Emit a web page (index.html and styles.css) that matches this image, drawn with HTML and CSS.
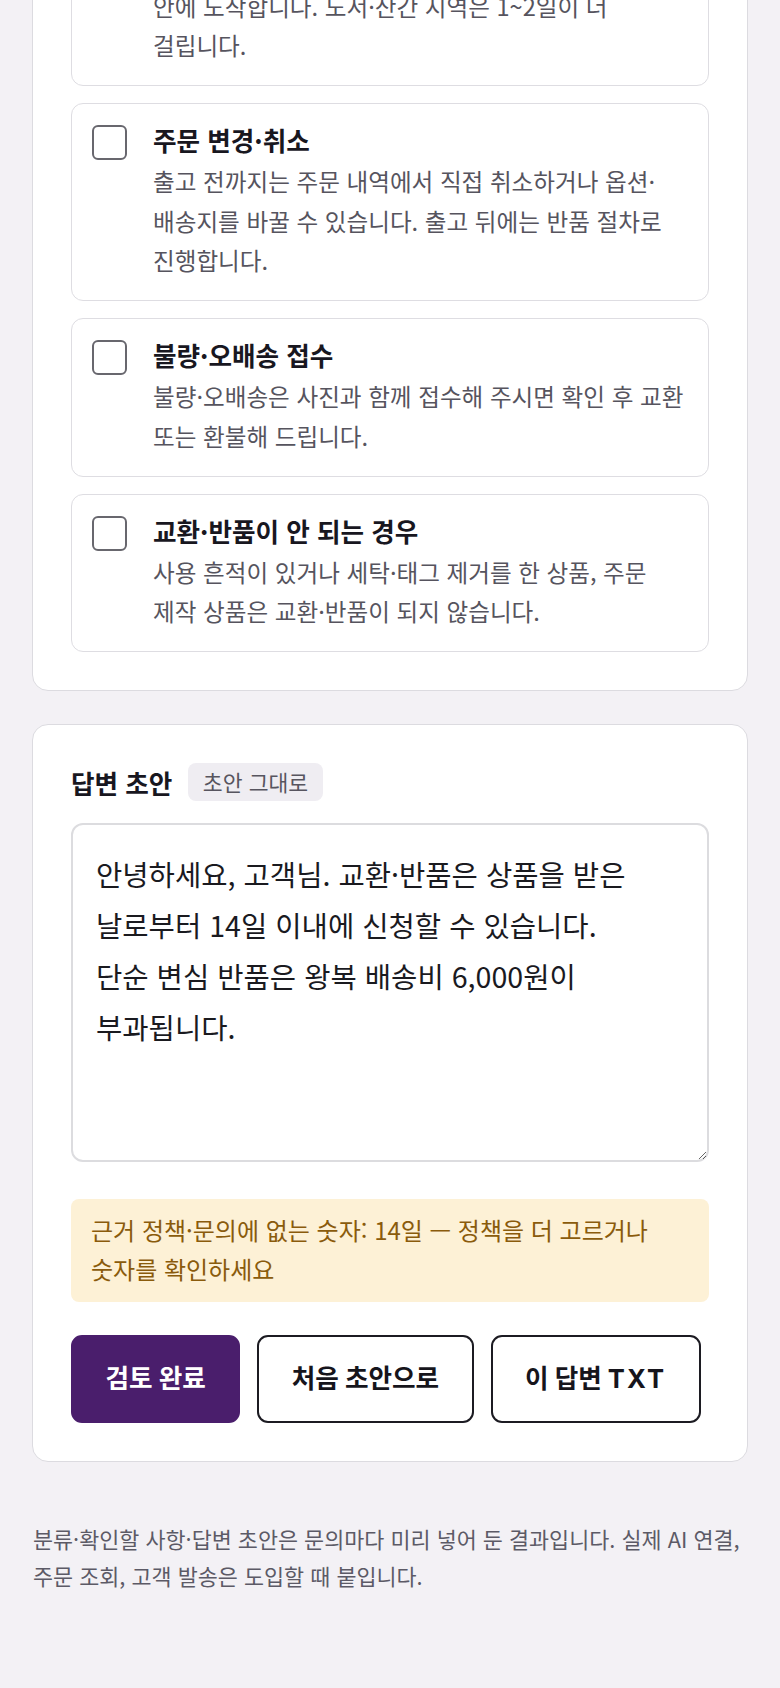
FILE: index.html
```html
<!DOCTYPE html>
<html lang="ko">
  <head>
    <meta charset="UTF-8" />
    <meta name="viewport" content="width=device-width, initial-scale=1.0" />
    <title>문의 답변 검토</title>
    <link rel="stylesheet" href="styles.css">
  </head>
  <body>
    <div class="page">
      <section class="panel">
        <div class="panel_head">
          <h2>확인할 사항</h2>
          <span class="tag">4개</span>
        </div>
        <ul class="checks">
          <li class="check">
            <input type="checkbox" class="box" id="c1" />
            <label for="c1">
              <strong>배송 기간</strong>
              <span>평일 오후 2시 전 결제 건은 당일 출고되며 보통 2~3일 안에 도착합니다. 도서·산간 지역은 1~2일이 더 걸립니다.</span>
            </label>
          </li>
          <li class="check">
            <input type="checkbox" class="box" id="c2" />
            <label for="c2">
              <strong>주문 변경·취소</strong>
              <span>출고 전까지는 주문 내역에서 직접 취소하거나 옵션·배송지를 바꿀 수 있습니다. 출고 뒤에는 반품 절차로 진행합니다.</span>
            </label>
          </li>
          <li class="check">
            <input type="checkbox" class="box" id="c3" />
            <label for="c3">
              <strong>불량·오배송 접수</strong>
              <span>불량·오배송은 사진과 함께 접수해 주시면 확인 후 교환 또는 환불해 드립니다.</span>
            </label>
          </li>
          <li class="check">
            <input type="checkbox" class="box" id="c4" />
            <label for="c4">
              <strong>교환·반품이 안 되는 경우</strong>
              <span>사용 흔적이 있거나 세탁·태그 제거를 한 상품, 주문 제작 상품은 교환·반품이 되지 않습니다.</span>
            </label>
          </li>
        </ul>
      </section>

      <section class="panel">
        <div class="panel_head">
          <h2>답변 초안</h2>
          <span class="tag">초안 그대로</span>
        </div>
        <textarea class="draft" rows="6">안녕하세요, 고객님. 교환·반품은 상품을 받은 날로부터 14일 이내에 신청할 수 있습니다.
단순 변심 반품은 왕복 배송비 6,000원이 부과됩니다.</textarea>
        <p class="warn">근거 정책·문의에 없는 숫자: 14일 — 정책을 더 고르거나 숫자를 확인하세요</p>
        <div class="actions">
          <button class="btn primary">검토 완료</button>
          <button class="btn">처음 초안으로</button>
          <button class="btn">이 답변 <span class="ext">TXT</span></button>
        </div>
      </section>

      <p class="note">분류·확인할 사항·답변 초안은 문의마다 미리 넣어 둔 결과입니다. 실제 AI 연결, 주문 조회, 고객 발송은 도입할 때 붙입니다.</p>
    </div>
  </body>
</html>
```

FILE: styles.css
```css
* {
  box-sizing: border-box;
  margin: 0;
  padding: 0;
}
body {
  font-family: "Noto Sans CJK KR", "Noto Sans", sans-serif;
  background-color: #f3f1f5;
  color: #18171f;
  word-break: keep-all;
}
.page {
  margin-top: -211px;
  padding: 0 32px 120px;
}
.panel {
  background-color: #fff;
  border: 1px solid #dcdbe0;
  border-radius: 16px;
  padding: 38px;
  margin-bottom: 33px;
}
.panel_head {
  display: flex;
  align-items: center;
  gap: 16px;
  height: 38px;
  margin-bottom: 22px;
}
.panel_head h2 {
  font-size: 25.6px;
  font-weight: 700;
}
.tag {
  background-color: #efedf2;
  color: #57555f;
  font-size: 21.6px;
  line-height: 38px;
  padding: 0 14.5px;
  border-radius: 8px;
}
.checks {
  list-style: none;
  display: flex;
  flex-direction: column;
  gap: 17px;
}
.check {
  display: flex;
  gap: 26px;
  border: 1px solid #dedde2;
  border-radius: 12px;
  padding: 20px 19px 19.5px 20px;
}
.box {
  -webkit-appearance: none;
  appearance: none;
  flex: none;
  width: 35px;
  height: 35px;
  margin-top: 1px;
  border: 2px solid #68676e;
  border-radius: 6px;
  background-color: #fff;
}
.check label {
  display: flex;
  flex-direction: column;
}
.check strong {
  font-size: 25.6px;
  line-height: 31px;
  font-weight: 700;
  margin-bottom: 7px;
}
.check span {
  font-size: 23.6px;
  line-height: 39.5px;
  color: #56545e;
}
.draft {
  display: block;
  width: 100%;
  height: 339px;
  font-family: inherit;
  font-size: 28.6px;
  line-height: 51px;
  color: #1a1a1f;
  word-break: keep-all;
  border: 2px solid #dcdcdf;
  border-radius: 12px;
  padding: 23px;
  margin-bottom: 37px;
}
.warn {
  background-color: #fdf1d6;
  color: #8a5b0c;
  font-size: 24px;
  line-height: 38.5px;
  padding: 12px 20px 14px;
  border-radius: 8px;
  margin-bottom: 33px;
}
.actions {
  display: flex;
  gap: 17px;
}
.btn {
  font-family: Inter, "Noto Sans CJK KR", sans-serif;
  font-size: 25.6px;
  font-weight: 700;
  line-height: 36px;
  color: #16151c;
  background-color: #fff;
  border: 2px solid #1c1b22;
  border-radius: 11px;
  padding: 24px 32.5px;
}
.btn.primary {
  background-color: #4a1e6c;
  border-color: #4a1e6c;
  color: #fff;
}
.btn .ext {
  letter-spacing: 0.08em;
}
.note {
  font-size: 21.8px;
  line-height: 36.6px;
  color: #5c5a66;
  padding: 26px 1px 0;
}
```
